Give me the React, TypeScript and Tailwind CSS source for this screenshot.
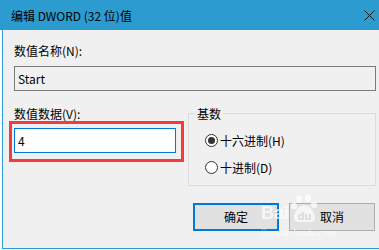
import React from "react";

const font = { fontFamily: '"Noto Sans CJK SC", "Noto Sans", sans-serif' };

function Radio({ checked, label }: { checked?: boolean; label: string }) {
  return (
    <div className="flex items-center h-[17px]">
      <span className="w-[13px] h-[13px] rounded-full border border-[#333333] bg-white flex items-center justify-center">
        {checked && <span className="w-[7px] h-[7px] rounded-full bg-[#333333]" />}
      </span>
      <span className="ml-[2px] leading-[17px]">{label}</span>
    </div>
  );
}

export default function App() {
  return (
    <div className="w-[379px] h-[250px] bg-white text-[12px] text-black overflow-hidden relative" style={font}>
      {/* title bar */}
      <div className="h-[30px] bg-[#2b9bd0] flex items-center pl-[11px] pr-[3px]">
        <span className="leading-[17px] flex-1">编辑 DWORD (32 位)值</span>
        <svg width="11" height="11" viewBox="0 0 11 11" className="mr-[1px]">
          <path d="M0.5 0.5 L10.5 10.5 M10.5 0.5 L0.5 10.5" stroke="#111" strokeWidth="1" />
        </svg>
      </div>
      {/* body */}
      <div className="ml-[2px] h-[219px] border-l border-b border-[#2b9bd0] bg-[#f0f0f0] pl-[11px] pr-[3px] pt-[12px]">
        <div className="leading-[17px] h-[17px]">数值名称(N):</div>
        <div className="mt-[7px] h-[25px] border border-[#7a7a7a] bg-[#f0f0f0] flex items-center pl-[3px]">
          Start
        </div>
        <div className="mt-[14px] flex">
          <div className="w-[162px]">
            <div className="leading-[17px] h-[17px]">数值数据(V):</div>
            <div className="relative mt-[6px]">
              <div className="h-[25px] border border-[#0078d7] bg-white flex items-center pl-[3px]">4</div>
              <div className="absolute left-[-5px] top-[-7px] w-[175px] h-[41px] border-[3px] border-[#f03c3c]" />
            </div>
          </div>
          <div className="ml-[12px] w-[188px] mt-[8px] h-[73px] border border-[#dcdcdc] relative pl-[16px] pt-[18px]">
            <span className="absolute left-[6px] top-[-9px] px-[2px] bg-[#f0f0f0] leading-[17px]">基数</span>
            <Radio checked label="十六进制(H)" />
            <div className="mt-[10px]">
              <Radio label="十进制(D)" />
            </div>
          </div>
        </div>
        <div className="mt-[17px] flex justify-end pr-[1px] gap-[10px]">
          <div className="w-[86px] h-[28px] bg-[#e1e1e1] border-2 border-[#0078d7] flex items-center justify-center">确定</div>
          <div className="w-[86px] h-[28px] bg-[#e1e1e1] border border-[#adadad] flex items-center justify-center">取消</div>
        </div>
      </div>
      {/* watermark */}
      <div className="absolute left-[261px] top-[194px] w-[95px] h-[46px] pointer-events-none opacity-70">
        <div className="flex items-end h-[30px]">
          <span className="text-[18px] font-bold text-white leading-[18px] mb-[2px]" style={{ fontFamily: '"Liberation Sans", Arial, sans-serif' }}>Bai</span>
          <svg width="30" height="30" viewBox="0 0 30 30" className="ml-[1px]">
            <ellipse cx="9" cy="5" rx="3" ry="4" fill="#ffffff" />
            <ellipse cx="18" cy="4" rx="3" ry="4" fill="#ffffff" />
            <ellipse cx="4" cy="12" rx="3" ry="3.5" fill="#ffffff" />
            <ellipse cx="24" cy="11" rx="3" ry="3.5" fill="#ffffff" />
            <path d="M14 11 C8 11 3 20 4 25 C5 29 10 28 14 28 C18 28 24 29 25 25 C26 20 20 11 14 11 Z" fill="#ffffff" />
            <text x="14.5" y="26" textAnchor="middle" fontSize="11" fontWeight="bold" fill="#d6d6d6" fontFamily="Liberation Sans, Arial, sans-serif">du</text>
          </svg>
        </div>
        <div className="text-[10px] leading-[12px] text-white mt-[3px]" style={{ fontFamily: '"Liberation Serif", serif' }}>jingyan.baidu.com</div>
      </div>
    </div>
  );
}
